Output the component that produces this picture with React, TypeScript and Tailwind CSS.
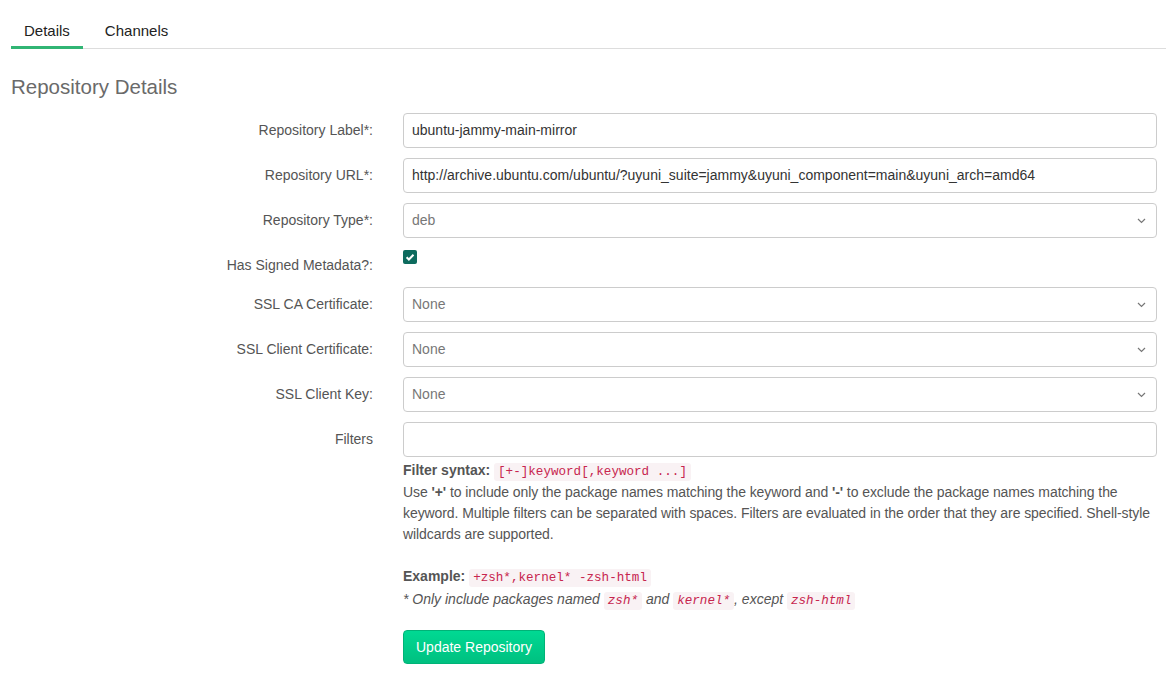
import React from 'react';

const font = { fontFamily: '"Liberation Sans", Arial, sans-serif' };

function Chevron() {
  return (
    <svg width="9" height="6" viewBox="0 0 9 6" className="absolute right-[10px] top-1/2 -translate-y-1/2">
      <path d="M1 1l3.5 3.5L8 1" fill="none" stroke="#777" strokeWidth="1.2" />
    </svg>
  );
}

function Row({ label, children }: { label: string; children: React.ReactNode }) {
  return (
    <div className="flex gap-[30px]">
      <label className="w-[362px] shrink-0 pt-[7px] text-right text-[14px] leading-5 text-[#555]">{label}</label>
      <div className="flex-1">{children}</div>
    </div>
  );
}

function TextInput({ value }: { value: string }) {
  return (
    <div className="flex h-[35px] items-center rounded-[4px] border border-[#ccc] bg-white px-[8px] text-[14px] text-[#333]">
      {value}
    </div>
  );
}

function Select({ value }: { value: string }) {
  return (
    <div className="relative flex h-[35px] items-center rounded-[4px] border border-[#ccc] bg-white px-[8px] text-[14px] text-[#777]">
      {value}
      <Chevron />
    </div>
  );
}

function Code({ children }: { children: React.ReactNode }) {
  return (
    <code
      className="rounded-[3px] bg-[#f9f2f4] px-[4px] py-[2px] text-[12.6px] tracking-normal text-[#c7254e]"
      style={{ fontFamily: '"Liberation Mono", "DejaVu Sans Mono", monospace' }}
    >
      {children}
    </code>
  );
}

export default function App() {
  return (
    <div className="min-h-[683px] bg-white" style={font}>
      <div className="ml-[11px] flex border-b border-[#ddd] pt-[21px]">
        <div className="-mb-px border-b-[3px] border-[#31b574] px-[13px] pb-[5px] text-[15px] leading-5 text-[#222]">Details</div>
        <div className="ml-[9px] px-[13px] pb-[5px] text-[15px] leading-5 text-[#222]">Channels</div>
      </div>
      <div className="pl-[11px] pr-[9px]">
        <h2 className="mt-[26px] text-[20.5px] leading-6 text-[#6a6a6a]">Repository Details</h2>
        <div className="mt-[14px] flex flex-col gap-[10px]">
          <Row label="Repository Label*:">
            <TextInput value="ubuntu-jammy-main-mirror" />
          </Row>
          <Row label="Repository URL*:">
            <TextInput value="http://archive.ubuntu.com/ubuntu/?uyuni_suite=jammy&uyuni_component=main&uyuni_arch=amd64" />
          </Row>
          <Row label="Repository Type*:">
            <Select value="deb" />
          </Row>
          <div className="flex h-[29px] gap-[30px]">
            <label className="w-[362px] shrink-0 pt-[7px] text-right text-[14px] leading-5 text-[#555]">Has Signed Metadata?:</label>
            <div className="flex-1 pt-[2px]">
              <span className="flex h-[14px] w-[14px] items-center justify-center rounded-[2px] bg-[#0d6b5e]">
                <svg width="10" height="10" viewBox="0 0 10 10">
                  <path d="M1.6 5.2l2.3 2.3L8.5 2.7" fill="none" stroke="white" strokeWidth="2" />
                </svg>
              </span>
            </div>
          </div>
          <Row label="SSL CA Certificate:">
            <Select value="None" />
          </Row>
          <Row label="SSL Client Certificate:">
            <Select value="None" />
          </Row>
          <Row label="SSL Client Key:">
            <Select value="None" />
          </Row>
          <Row label="Filters">
            <TextInput value="" />
            <div className="mt-[3px] text-[14px] leading-[21px] text-[#555]">
              <div className="leading-[20px]">
                <b>Filter syntax:</b> <Code>[+-]keyword[,keyword ...]</Code>
              </div>
              <div className="tracking-[-0.08px]">
                Use <b>'+'</b> to include only the package names matching the keyword and <b>'-'</b> to exclude the package
                names matching the keyword. Multiple filters can be separated with spaces. Filters are evaluated in the order
                that they are specified. Shell-style wildcards are supported.
              </div>
              <div className="mt-[21px]">
                <b>Example:</b> <Code>+zsh*,kernel* -zsh-html</Code>
              </div>
              <div className="italic">
                * Only include packages named <Code>zsh*</Code> and <Code>kernel*</Code>, except <Code>zsh-html</Code>
              </div>
            </div>
            <button className="mt-[18px] h-[34px] rounded-[4px] border border-[#00b377] bg-gradient-to-b from-[#00d993] to-[#00c080] px-[12px] text-[14px] text-white">
              Update Repository
            </button>
          </Row>
        </div>
      </div>
    </div>
  );
}
